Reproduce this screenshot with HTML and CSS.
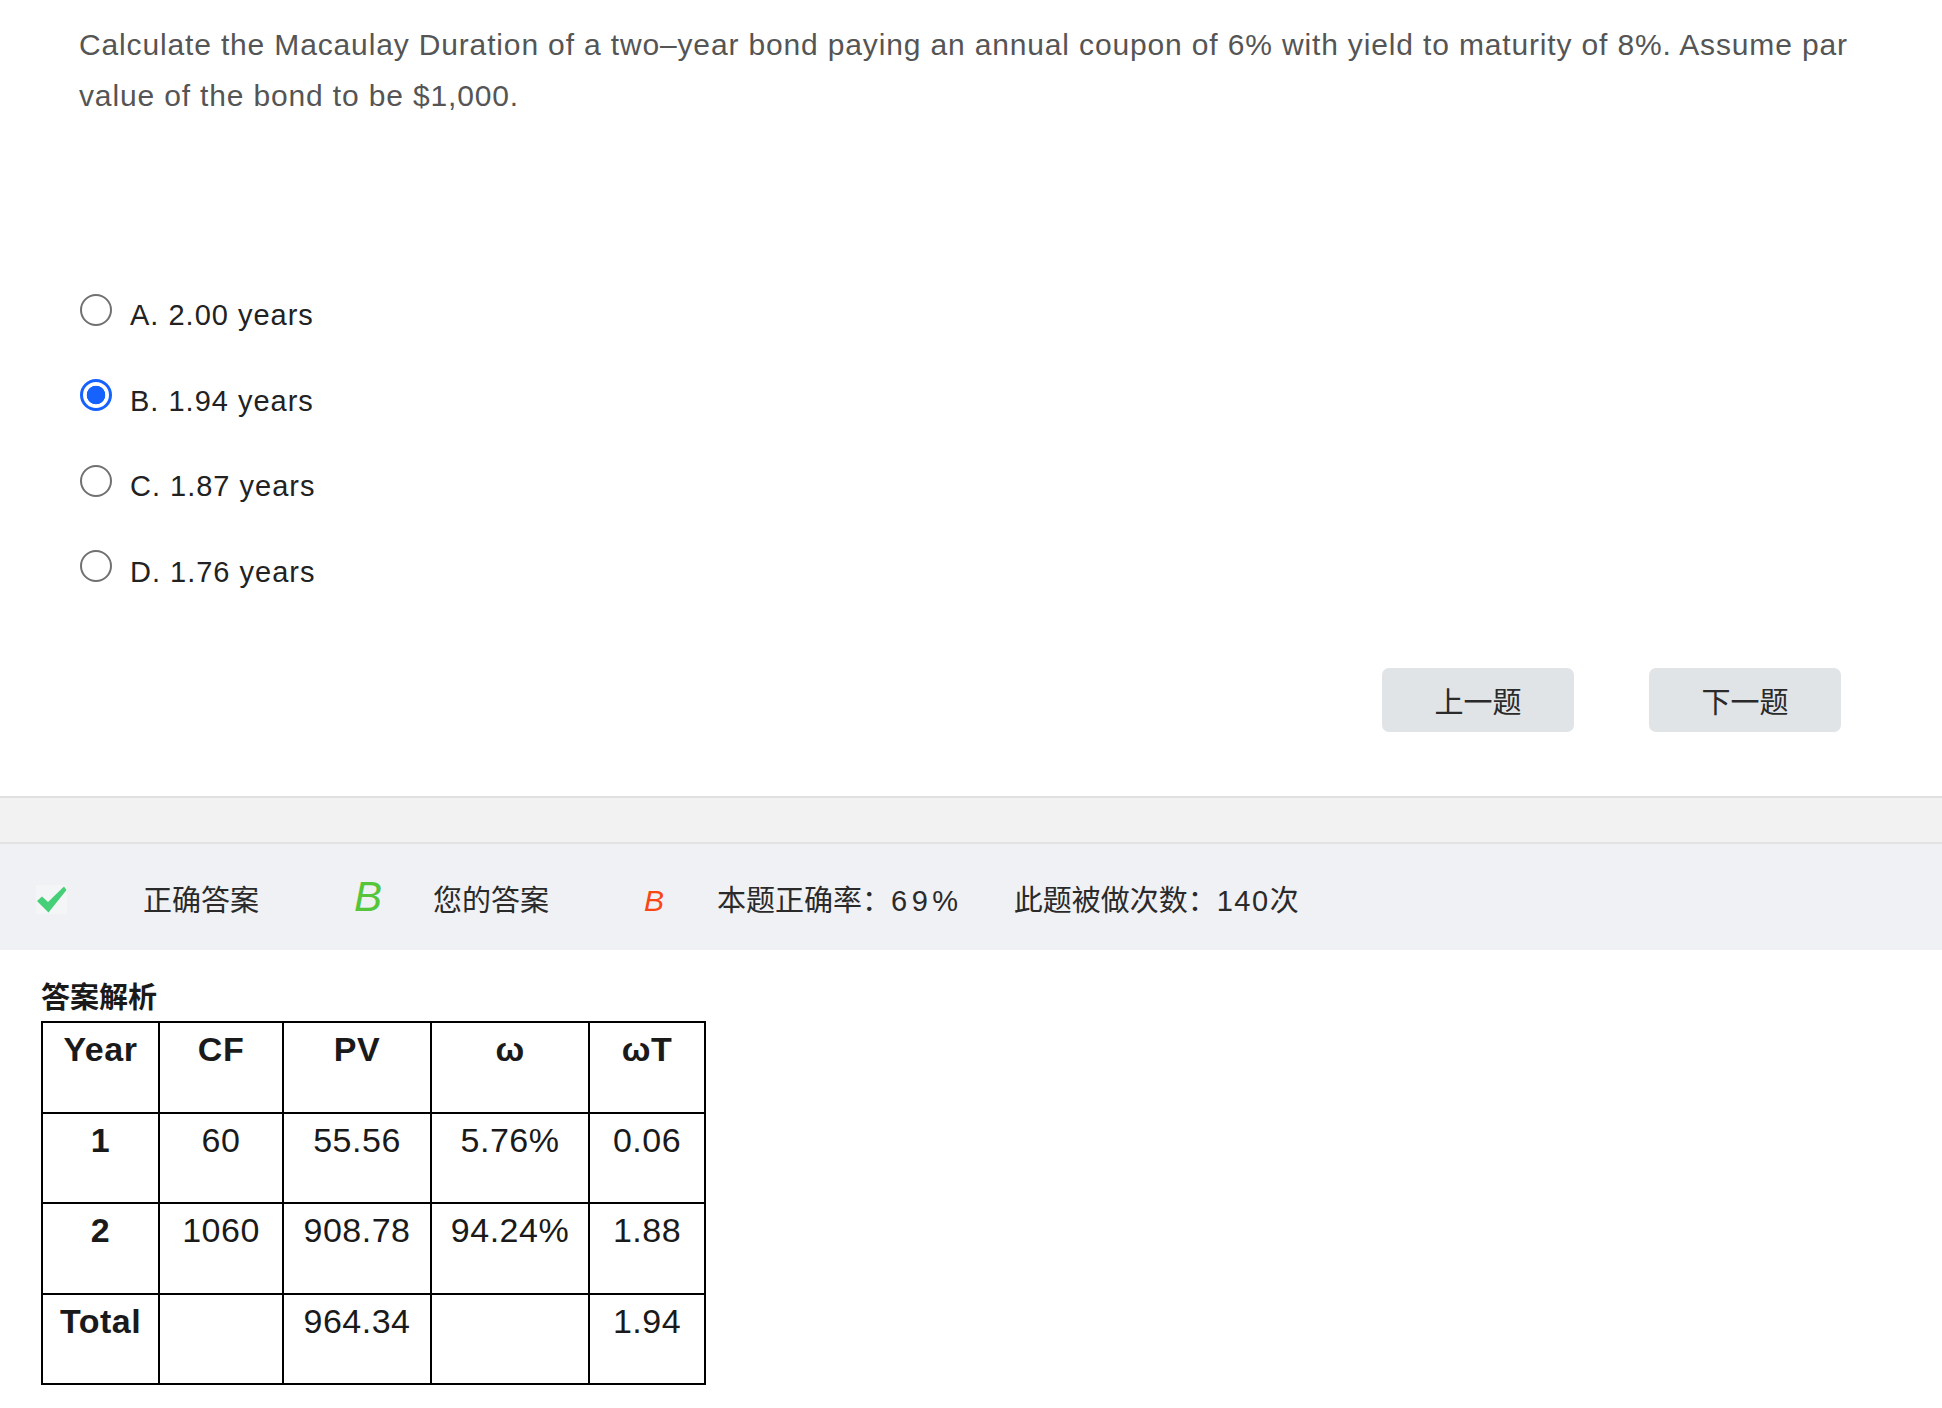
FILE: index.html
```html
<!DOCTYPE html>
<html lang="zh-CN">
<head>
<meta charset="utf-8">
<title>Macaulay Duration</title>
<link rel="stylesheet" href="styles.css">
</head>
<body>
<div class="question">Calculate the Macaulay Duration of a two–year bond paying an annual coupon of 6% with yield to maturity of 8%. Assume par value of the bond to be $1,000.</div>

<ul class="options">
  <li class="option"><span class="radio"></span><span class="opt-text">A. 2.00 years</span></li>
  <li class="option"><span class="radio checked"></span><span class="opt-text">B. 1.94 years</span></li>
  <li class="option"><span class="radio"></span><span class="opt-text">C. 1.87 years</span></li>
  <li class="option"><span class="radio"></span><span class="opt-text">D. 1.76 years</span></li>
</ul>

<div class="nav">
  <button class="nav-btn">上一题</button>
  <button class="nav-btn">下一题</button>
</div>

<div class="band"></div>

<div class="stats">
  <span class="check"><svg width="31" height="29" viewBox="0 0 31 29"><rect width="31" height="29" fill="#f4f5f7"/><path d="M1 16 L6 11.5 L12 17 L28 1.5 L30.5 5 L12.5 27.5 Z" fill="#45cf78"/></svg></span>
  <span class="label label-correct">正确答案</span>
  <span class="ans-correct">B</span>
  <span class="label label-yours">您的答案</span>
  <span class="ans-yours">B</span>
  <span class="label label-rate">本题正确率：<span class="num">69%</span></span>
  <span class="label label-count">此题被做次数：<span class="num">140</span>次</span>
</div>

<h3 class="analysis-title">答案解析</h3>
<table class="analysis">
  <colgroup>
    <col class="c1"><col class="c2"><col class="c3"><col class="c4"><col class="c5">
  </colgroup>
  <tr class="head"><td>Year</td><td>CF</td><td>PV</td><td>ω</td><td>ωT</td></tr>
  <tr><td class="b">1</td><td>60</td><td>55.56</td><td>5.76%</td><td>0.06</td></tr>
  <tr><td class="b">2</td><td>1060</td><td>908.78</td><td>94.24%</td><td>1.88</td></tr>
  <tr><td class="b">Total</td><td></td><td>964.34</td><td></td><td>1.94</td></tr>
</table>
</body>
</html>
```

FILE: styles.css
```css
html, body {
  margin: 0;
  padding: 0;
  background: #fff;
}
body {
  font-family: "Liberation Sans", "Noto Sans CJK SC", sans-serif;
  color: #222;
}
.question {
  padding: 19px 79px 0 79px;
  font-size: 30px;
  line-height: 51px;
  color: #555;
  letter-spacing: 0.85px;
}
.options {
  list-style: none;
  margin: 152px 0 0 0;
  padding: 0 0 0 80px;
}
.option {
  display: flex;
  align-items: center;
  height: 85.5px;
}
.radio {
  width: 32px;
  height: 32px;
  box-sizing: border-box;
  border-radius: 50%;
  border: 2px solid #717171;
  margin-bottom: 12px;
  flex: none;
}
.radio.checked {
  border: 3px solid #1662ff;
  background: radial-gradient(circle, #1662ff 0 9px, #fff 9.6px);
}
.opt-text {
  margin-left: 18px;
  font-size: 29px;
  letter-spacing: 1px;
  color: #222;
}
.nav {
  display: flex;
  justify-content: flex-end;
  gap: 75px;
  padding-right: 101px;
  margin-top: 53px;
}
.nav-btn {
  width: 192px;
  height: 64px;
  border: none;
  border-radius: 7px;
  background: #e1e4e7;
  font-family: "Noto Sans CJK SC", sans-serif;
  font-size: 29px;
  color: #2a2a2a;
  padding: 0;
}
.band {
  margin-top: 64px;
  height: 44px;
  background: #f2f2f2;
  border-top: 2px solid #e0e0e0;
  border-bottom: 2px solid #e2e2e2;
}
.stats {
  display: flex;
  align-items: center;
  height: 106px;
  box-sizing: border-box;
  padding: 8px 0 0 36px;
  background: #f0f1f5;
}
.check {
  display: flex;
  width: 31px;
  height: 29px;
  margin-top: -4px;
}
.label {
  font-size: 29px;
  color: #2a2a2a;
  line-height: 40px;
}
.label .num {
  letter-spacing: 1.6px;
}
.label-rate .num {
  letter-spacing: 4.5px;
}
.label-correct { margin-left: 76px; }
.ans-correct {
  margin-left: 95px;
  font-size: 42px;
  font-style: italic;
  color: #55c53a;
  line-height: 40px;
  margin-top: -8px;
}
.label-yours { margin-left: 51px; }
.ans-yours {
  margin-left: 95px;
  font-size: 30px;
  font-style: italic;
  color: #fa4614;
  line-height: 40px;
}
.label-rate { margin-left: 53px; }
.label-count { margin-left: 51px; }
.analysis-title {
  margin: 30px 0 5px 41px;
  font-size: 29px;
  line-height: 36px;
  font-weight: bold;
  color: #1a1a1a;
}
.analysis {
  margin-left: 41px;
  border-collapse: collapse;
  table-layout: fixed;
  width: 663px;
}
.c1 { width: 117px; }
.c2 { width: 124px; }
.c3 { width: 148px; }
.c4 { width: 158px; }
.c5 { width: 116px; }
.analysis td {
  border: 2px solid #000;
  height: 90.5px;
  box-sizing: border-box;
  vertical-align: top;
  text-align: center;
  padding: 4px 0 0 0;
  font-size: 34px;
  line-height: 44px;
  letter-spacing: 0.5px;
  color: #1a1a1a;
}
.analysis .head td,
.analysis td.b {
  font-weight: bold;
}
```
